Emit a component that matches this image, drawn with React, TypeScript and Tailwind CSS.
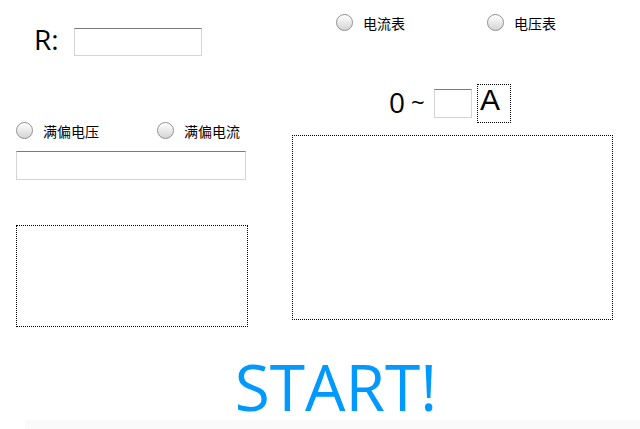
import React from "react";

function Radio({ label }: { label: string }) {
  return (
    <div className="flex items-center">
      <div className="w-[17px] h-[17px] rounded-full border border-[#8f8f8f] bg-linear-to-b from-white to-[#d4d4d4] shadow-[inset_0_1px_1px_rgba(255,255,255,0.9)]" />
      <span className="ml-[10px] text-[14px] leading-none text-black">{label}</span>
    </div>
  );
}

function TextBox({ w, h }: { w: string; h: string }) {
  return <div className={`${w} ${h} border border-[#d4d4d4] border-t-[#7a7a7a] bg-white`} />;
}

export default function App() {
  return (
    <div className="w-[640px] h-[429px] bg-white overflow-hidden relative font-['Noto_Sans_CJK_SC','Noto_Sans',sans-serif] text-black">
      <div className="flex">
        {/* left column */}
        <div className="ml-[16px] w-[232px] flex flex-col">
          <div className="mt-[28px] h-[28px] flex items-center">
            <span className="ml-[18px] w-[40px] text-[28px] leading-none font-['Open_Sans',sans-serif] -mt-[6px]">R:</span>
            <TextBox w="w-[128px]" h="h-[28px]" />
          </div>
          <div className="mt-[66px] h-[17px] flex items-center">
            <div className="w-[141px]">
              <Radio label="满偏电压" />
            </div>
            <Radio label="满偏电流" />
          </div>
          <div className="mt-[12px]">
            <TextBox w="w-[230px]" h="h-[29px]" />
          </div>
          <div className="mt-[45px] w-[232px] h-[102px] border border-dotted border-black" />
        </div>
        {/* right column */}
        <div className="ml-[44px] w-[321px] flex flex-col">
          <div className="mt-[14px] h-[17px] flex items-center pl-[44px]">
            <div className="w-[151px]">
              <Radio label="电流表" />
            </div>
            <Radio label="电压表" />
          </div>
          <div className="mt-[53px] h-[39px] flex items-center pl-[97px]">
            <span className="text-[28px] leading-none font-['Open_Sans',sans-serif] -mt-[4px]">0</span>
            <span className="ml-[6px] w-[16px] text-[24px] leading-none font-['Open_Sans',sans-serif] -mt-[4px]">~</span>
            <div className="ml-[7px]">
              <TextBox w="w-[38px]" h="h-[29px]" />
            </div>
            <div className="ml-[5px] w-[34px] h-[39px] border border-dotted border-black flex items-end justify-start pl-[2px]">
              <span className="text-[30px] leading-none font-['Liberation_Sans',Arial,sans-serif] mb-[7px]">A</span>
            </div>
          </div>
          <div className="mt-[12px] w-[321px] h-[185px] border border-dotted border-black" />
        </div>
      </div>
      <div className="pl-[32px] mt-[28px] text-center">
        <span className="text-[64px] leading-none text-[#0099ff] font-['Open_Sans',sans-serif]">START!</span>
      </div>
      <div className="absolute left-[25px] right-0 bottom-0 h-[9px] bg-[#fafafa]" />
    </div>
  );
}
